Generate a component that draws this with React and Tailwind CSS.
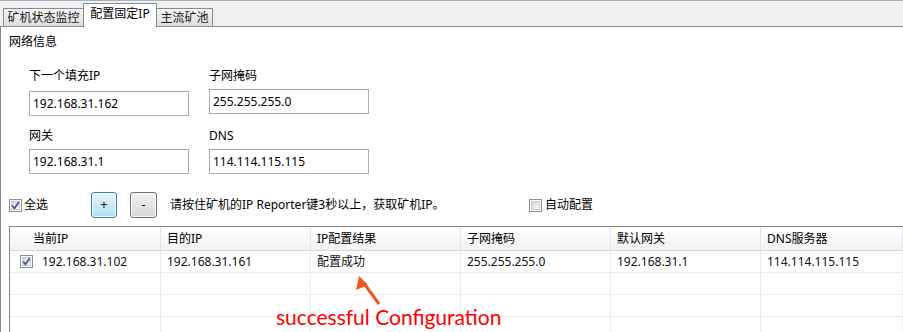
import React from 'react';

const font = "font-['Noto_Sans','Noto_Sans_CJK_SC',sans-serif]";

const CheckBox = ({ checked }) => (
  <svg width="13" height="13" viewBox="0 0 13 13" className="shrink-0">
    <defs>
      <linearGradient id={checked ? 'cbg1' : 'cbg0'} x1="0" y1="0" x2="1" y2="1">
        <stop offset="0" stopColor="#d2d4d8" />
        <stop offset="1" stopColor="#fbfbfb" />
      </linearGradient>
    </defs>
    <rect x="0.5" y="0.5" width="12" height="12" fill="#fff" stroke="#8e8f8f" />
    <rect x="2.5" y="2.5" width="8" height="8" fill={`url(#${checked ? 'cbg1' : 'cbg0'})`} stroke="#c9cbd0" />
    {checked && (
      <path d="M3.2 6.4 L5.4 9.4 L9.8 3.2" fill="none" stroke="#3d5591" strokeWidth="1.7" />
    )}
  </svg>
);

const TextBox = ({ value, className = '' }) => (
  <div className={`w-[160px] h-[25px] border border-[#abadb3] border-t-[#a0a3ab] bg-white flex items-center pl-[3px] text-[12px] text-black ${className}`}>
    {value}
  </div>
);

const columns = ['当前IP', '目的IP', 'IP配置结果', '子网掩码', '默认网关', 'DNS服务器'];
const row = ['192.168.31.102', '192.168.31.161', '配置成功', '255.255.255.0', '192.168.31.1', '114.114.115.115'];

const App = () => {
  return (
    <div className={`w-[903px] h-[332px] bg-white relative overflow-hidden flex flex-col text-[12px] leading-[16px] text-black ${font}`}>
      {/* Tab strip */}
      <div className="h-[27px] shrink-0 bg-[#f0f0f0] border-t border-[#a6b3c6] border-b border-b-[#898c95] flex items-end pl-[3px]">
        <div className="w-[81px] h-[19px] -mb-px border border-[#898c95] bg-gradient-to-b from-[#f4f4f4] to-[#dedede] flex items-center justify-center text-[12px] text-[#1a1a1a]">
          矿机状态监控
        </div>
        <div className="w-[74px] h-[24px] -mb-px border border-b-0 border-[#898c95] bg-white flex items-start pt-[2px] justify-center text-[12px] -ml-px z-10">
          配置固定IP
        </div>
        <div className="w-[56px] h-[19px] -mb-px border border-l-0 border-[#898c95] bg-gradient-to-b from-[#f4f4f4] to-[#dedede] flex items-center justify-center text-[12px] text-[#1a1a1a]">
          主流矿池
        </div>
      </div>

      {/* Content */}
      <div className="flex-1 border-l border-[#828790] flex flex-col relative">
        <div className="pt-[7px] pl-[8px]">网络信息</div>

        <div className="flex mt-[18px] ml-[28px] gap-[20px]">
          <div className="flex flex-col">
            <div>下一个填充IP</div>
            <TextBox value="192.168.31.162" className="mt-[7px]" />
            <div className="mt-[12px]">网关</div>
            <TextBox value="192.168.31.1" className="mt-[5px]" />
          </div>
          <div className="flex flex-col">
            <div>子网掩码</div>
            <TextBox value="255.255.255.0" className="mt-[5px]" />
            <div className="mt-[14px]">DNS</div>
            <TextBox value="114.114.115.115" className="mt-[5px]" />
          </div>
        </div>

        {/* Toolbar row */}
        <div className="flex items-center h-[26px] mt-[18px] ml-[8px]">
          <div className="w-[82px] flex items-center gap-[2px]">
            <CheckBox checked />
            <span>全选</span>
          </div>
          <button className="w-[26px] h-[26px] rounded-[3px] border border-[#3c7fb1] bg-gradient-to-b from-[#eaf6fd] to-[#b2dcf3] shadow-[inset_0_0_0_1px_#f4fbff] flex items-center justify-center text-[12px] text-black">
            +
          </button>
          <button className="w-[27px] h-[26px] ml-[13px] rounded-[3px] border border-[#707070] bg-gradient-to-b from-[#f2f2f2] to-[#d8d8d8] shadow-[inset_0_0_0_1px_#fbfbfb] flex items-center justify-center text-[12px] text-black">
            -
          </button>
          <div className="w-[359px] ml-[13px]">请按住矿机的IP Reporter键3秒以上，获取矿机IP。</div>
          <div className="flex items-center gap-[3px]">
            <CheckBox />
            <span>自动配置</span>
          </div>
        </div>

        {/* Table */}
        <div className="flex-1 mt-[8px] ml-[8px] border-t border-l border-[#828790] flex flex-col">
          <div className="grid grid-cols-[151px_150px_150px_150px_150px_1fr] h-[24px] bg-gradient-to-b from-[#ffffff] to-[#f1f2f4] border-b border-[#d5d5d5]">
            {columns.map((c, i) => (
              <div
                key={c}
                className={`flex items-center border-r border-[#e3e4e7] ${i === 0 ? 'pl-[23px]' : 'pl-[6px]'}`}
              >
                {c}
              </div>
            ))}
          </div>
          {[0, 1, 2, 3].map((r) => (
            <div
              key={r}
              className="grid grid-cols-[151px_150px_150px_150px_150px_1fr] h-[22px] border-b border-[#ececec]"
            >
              {columns.map((c, i) => (
                <div key={c} className="flex items-center border-r border-[#ececec] pl-[6px] text-[#111]">
                  {r === 0 && i === 0 && (
                    <span className="flex items-center gap-[9px] pl-[4px]">
                      <CheckBox checked />
                      <span>{row[0]}</span>
                    </span>
                  )}
                  {r === 0 && i > 0 && row[i]}
                </div>
              ))}
            </div>
          ))}
        </div>

        {/* Annotation: arrow pointing at the result cell */}
        <svg className="absolute left-[340px] top-[240px]" width="60" height="60" viewBox="0 0 60 60">
          <line x1="38" y1="37" x2="22" y2="15" stroke="#f0561f" strokeWidth="3" />
          <polygon points="18,9 15,23 27,18" fill="#f0561f" />
        </svg>
        <div className="absolute left-[275px] top-[276px] text-[21px] leading-[28px] text-[#ff0000] font-['Lato',sans-serif]">
          successful Configuration
        </div>
      </div>
    </div>
  );
};

export default App;
